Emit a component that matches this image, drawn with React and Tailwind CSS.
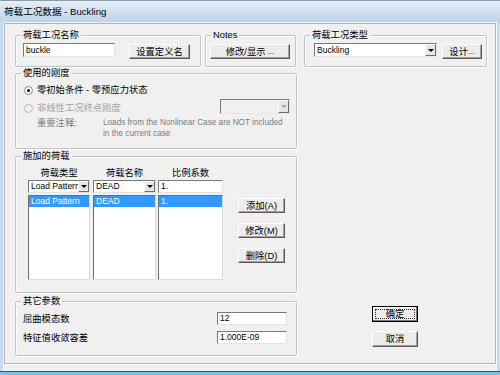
import React from "react";

const zh = "text-[9.3px] leading-[12px]";
const en = "text-[8.5px] leading-[11px]";

function Group({ label, className, children }) {
  return (
    <div
      className={
        "rounded-[2px] border border-[#c4c4c4] shadow-[inset_1px_1px_0_#ffffff,1px_1px_0_#ffffff] " +
        className
      }
    >
      <span className={"-mt-[7px] ml-[5px] block w-fit bg-[#f0f0f0] px-[2px] " + zh}>{label}</span>
      {children}
    </div>
  );
}

function Btn({ children, className = "" }) {
  return (
    <button
      type="button"
      className={
        "flex shrink-0 items-center justify-center border border-t-white border-l-white border-r-[#5a5a5a] border-b-[#5a5a5a] bg-[#ececec] shadow-[inset_-1px_-1px_0_#a0a0a0] " +
        zh +
        " " +
        className
      }
    >
      {children}
    </button>
  );
}

function Box({ children, className = "" }) {
  return (
    <div
      className={
        "flex shrink-0 items-center overflow-hidden whitespace-nowrap border border-t-[#7a7a7a] border-l-[#7a7a7a] border-r-[#e4e4e4] border-b-[#e4e4e4] bg-white pl-[2px] " +
        en +
        " " +
        className
      }
    >
      {children}
    </div>
  );
}

function Arrow({ disabled }) {
  return (
    <div className="ml-auto flex h-full w-[11px] shrink-0 items-center justify-center border border-t-white border-l-white border-r-[#6a6a6a] border-b-[#6a6a6a] bg-[#e6e6e6]">
      <span
        className={
          "h-0 w-0 border-x-[3px] border-t-[3px] border-x-transparent " +
          (disabled ? "border-t-[#a8a8a8]" : "border-t-black")
        }
      />
    </div>
  );
}

function Combo({ text, className = "", disabled }) {
  return (
    <div
      className={
        "flex shrink-0 items-center border border-t-[#7a7a7a] border-l-[#7a7a7a] border-r-[#e4e4e4] border-b-[#e4e4e4] " +
        (disabled ? "bg-[#f0f0f0] " : "bg-white ") +
        className
      }
    >
      <span className={"min-w-0 flex-1 overflow-hidden whitespace-nowrap pl-[2px] " + en}>{text}</span>
      <Arrow disabled={disabled} />
    </div>
  );
}

function Radio({ checked, disabled }) {
  return (
    <span
      className={
        "flex h-[9px] w-[9px] shrink-0 items-center justify-center rounded-full border " +
        (disabled ? "border-[#b8b8b8] bg-[#f0f0f0]" : "border-[#8a8a8a] bg-white")
      }
    >
      {checked && <span className="h-[3px] w-[3px] rounded-full bg-black" />}
    </span>
  );
}

function ListCol({ width, text }) {
  return (
    <div
      className={
        "h-[85px] border border-t-[#6d6d6d] border-l-[#6d6d6d] border-r-[#dcdcdc] border-b-[#dcdcdc] bg-white " +
        width
      }
    >
      <div className={"h-[11px] bg-[#3399ff] pl-[2px] text-white whitespace-nowrap " + en}>{text}</div>
    </div>
  );
}

export default function App() {
  return (
    <div className="flex h-[375px] w-[500px] flex-col overflow-hidden bg-[#c9dcef] font-['Liberation_Sans','Noto_Sans_CJK_SC',sans-serif] text-black">
      <div className="flex h-[22px] shrink-0 items-center border-t border-[#8d9bab] bg-gradient-to-b from-[#e6eef8] to-[#bdd3ea] pl-[4px] text-[9.6px] leading-[12px]">
        荷载工况数据 - Buckling
      </div>

      <div className="mx-[3px] flex h-[349px] shrink-0 flex-col bg-[#f0f0f0]">
        <div className="mx-[1px] mt-[1px] h-[341px] border border-[#b4b4b4] pl-[10px] shadow-[1px_1px_0_#ffffff]">
          {/* row 1 */}
          <div className="mt-[11px] flex">
            <Group label="荷载工况名称" className="h-[32px] w-[186px]">
              <div className="mt-[2px] flex items-start pl-[7px]">
                <Box className="h-[14px] w-[92px]">buckle</Box>
                <Btn className="ml-[14px] mt-[1px] h-[15px] w-[61px]">设置定义名</Btn>
              </div>
            </Group>
            <Group label="Notes" className="ml-[4px] h-[32px] w-[91px]">
              <div className="mt-[3px] flex pl-[4px]">
                <Btn className="h-[15px] w-[80px]">
                  修改/显示 <span className="ml-[2px] text-[8px]">...</span>
                </Btn>
              </div>
            </Group>
            <Group label="荷载工况类型" className="ml-[8px] h-[32px] w-[183px]">
              <div className="mt-[2px] flex items-start pl-[9px]">
                <Combo text="Buckling" className="h-[14px] w-[123px]" />
                <Btn className="ml-[5px] mt-[1px] h-[15px] w-[40px]">
                  设计<span className="text-[8px]">...</span>
                </Btn>
              </div>
            </Group>
          </div>

          {/* row 2 */}
          <Group label="使用的刚度" className="mt-[6px] h-[76px] w-[282px]">
            <div className="mt-[5px] flex h-[12px] items-center gap-[4px] pl-[8px]">
              <Radio checked />
              <span className={zh}>零初始条件 - 零预应力状态</span>
            </div>
            <div className="mt-[3px] flex h-[15px] items-end pl-[8px] pr-[6px]">
              <div className="flex h-[12px] items-center gap-[4px]">
                <Radio disabled />
                <span className={"text-[#a3a3a3] " + zh}>非线性工况终点刚度</span>
              </div>
              <Combo disabled text="" className="ml-auto h-[15px] w-[70px]" />
            </div>
            <div className="mt-[3px] flex pl-[21px] text-[#7a7a7a]">
              <span className={"w-[66px] " + zh}>重要注释:</span>
              <div className="text-[8.2px] leading-[11px] whitespace-nowrap">
                <div>Loads from the Nonlinear Case are NOT included</div>
                <div>in the current case</div>
              </div>
            </div>
          </Group>

          {/* row 3 */}
          <Group label="施加的荷载" className="mt-[7px] h-[137px] w-[282px]">
            <div className="flex pl-[12px]">
              <div className="mt-[5px] flex flex-col">
                <div className={"flex h-[12px] text-center " + zh}>
                  <span className="w-[62px]">荷载类型</span>
                  <span className="ml-[3px] w-[63px]">荷载名称</span>
                  <span className="ml-[2px] w-[65px]">比例系数</span>
                </div>
                <div className="mt-[1px] flex h-[13px]">
                  <Combo text="Load Pattern" className="h-[13px] w-[62px]" />
                  <Combo text="DEAD" className="ml-[3px] h-[13px] w-[63px]" />
                  <Box className="ml-[2px] h-[13px] w-[65px]">1.</Box>
                </div>
                <div className="mt-[2px] flex">
                  <ListCol width="w-[62px]" text="Load Pattern" />
                  <ListCol width="ml-[3px] w-[63px]" text="DEAD" />
                  <ListCol width="ml-[2px] w-[65px]" text="1." />
                </div>
              </div>
              <div className="ml-[15px] mt-[36px] flex flex-col gap-[10px]">
                <Btn className="h-[15px] w-[47px]">添加(A)</Btn>
                <Btn className="h-[15px] w-[47px]">修改(M)</Btn>
                <Btn className="h-[15px] w-[47px]">删除(D)</Btn>
              </div>
            </div>
          </Group>

          {/* row 4 */}
          <div className="mt-[8px] flex items-start">
            <Group label="其它参数" className="h-[55px] w-[282px]">
              <div className="mt-[5px] flex items-center justify-between pl-[7px] pr-[9px]">
                <span className={zh}>屈曲模态数</span>
                <Box className="h-[13px] w-[70px]">12</Box>
              </div>
              <div className="mt-[6px] flex items-center justify-between pl-[7px] pr-[9px]">
                <span className={zh}>特征值收敛容差</span>
                <Box className="h-[13px] w-[70px]">1.000E-09</Box>
              </div>
            </Group>
            <div className="ml-[75px] mt-[5px] flex flex-col">
              <button
                type="button"
                className="flex h-[16px] w-[46px] items-center justify-center border border-black bg-[#ececec] p-[2px] shadow-[inset_-1px_-1px_0_#7a7a7a,inset_1px_1px_0_#ffffff]"
              >
                <span className={"flex h-full w-full items-center justify-center border border-dotted border-[#333] " + zh}>
                  确定
                </span>
              </button>
              <Btn className="mt-[9px] h-[16px] w-[46px]">取消</Btn>
            </div>
          </div>
        </div>
      </div>

      <div className="h-[1px] shrink-0 bg-[#1f5b7a]" />
      <div className="flex-1 bg-[#7fc0e4]" />
    </div>
  );
}
